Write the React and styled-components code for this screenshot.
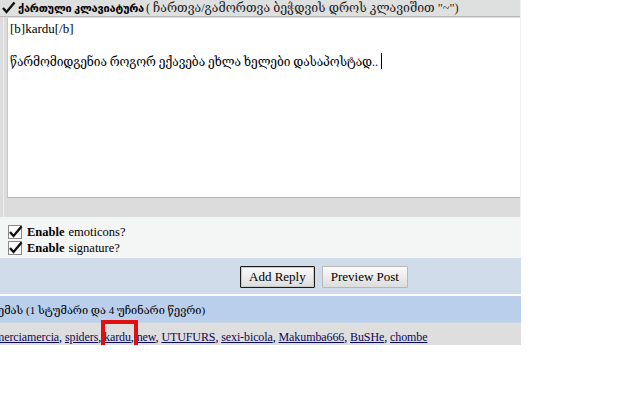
import React from 'react'
import styled, { createGlobalStyle } from 'styled-components';

const GlobalStyle = createGlobalStyle`
  body {
    margin: 0;
    background: #fff;
    overflow: hidden;
  }
`;

const serif = `"Liberation Serif", "DejaVu Serif", serif`;
const geo = `"Liberation Serif", "DejaVu Serif", "DejaVu Sans", serif`;

const Page = styled.div`
  width: 521px;
  font-family: ${serif};
  color: #000;
  position: relative;
`;

const EditorPanel = styled.div`
  background: #dcdcdc;
  border-right: 1px solid #f0f0f0;
`;

const HeaderBar = styled.div`
  height: 16px;
  background: #dedfdf;
  border-bottom: 1px solid #b9b9b9;
  display: flex;
  align-items: center;
  gap: 2px;
  padding-left: 1px;
  white-space: nowrap;
  overflow: hidden;
`;

const KeyboardTitle = styled.span`
  font-family: "Liberation Serif", "DejaVu Sans", sans-serif;
  font-weight: bold;
  font-size: 11px;
  letter-spacing: -0.2px;
`;

const KeyboardHint = styled.span`
  font-family: ${geo};
  font-size: 12.3px;
  color: #222;
`;

const EditorBody = styled.div`
  padding: 1px 0 19px 7px;
  background: linear-gradient(to right, #dcdcdc 0 3px, #eeeeee 3px 4px, #dcdcdc 4px);
`;

const TextBox = styled.div`
  height: 176px;
  background: #fff;
  border-left: 1px solid #c8c8c8;
  border-bottom: 1px solid #b8b8b8;
  padding: 3px 0 0 2px;
  font-size: 13px;
  line-height: 16px;
`;

const TextLine = styled.div`
  font-family: ${geo};
  font-size: ${(props) => (props.geo ? '12px' : '13px')};
  margin-bottom: ${(props) => (props.gap ? '16px' : '0')};
  letter-spacing: ${(props) => (props.geo ? '-0.1px' : '0')};
  white-space: nowrap;
`;

const Caret = styled.span`
  display: inline-block;
  width: 1px;
  height: 16px;
  background: #000;
  vertical-align: -3px;
  margin-left: 3px;
`;

const OptionsPanel = styled.div`
  background: #f4f6f5;
  padding: 7px 0 1px 8px;
  height: 33px;
`;

const OptionRow = styled.label`
  display: flex;
  align-items: center;
  gap: 4px;
  font-size: 12.5px;
  height: 16px;
  & b {
    margin-right: 4px;
  }
`;

const ButtonRow = styled.div`
  background: #d1dceb;
  height: 36px;
  display: flex;
  align-items: center;
  gap: 7px;
  padding-left: 240px;
  & > * {
    margin-top: 2px;
  }
`;

const Button = styled.button`
  font-family: ${serif};
  font-size: 13px;
  height: 22px;
  padding: 0 8px;
  background: linear-gradient(#fbfbfb, #dcdcdc);
  border: 1px solid ${(props) => (props.focused ? '#1c1c1c' : '#b8b8b8')};
  box-shadow: ${(props) => (props.focused ? 'inset 0 0 0 1px #c8c8c8' : 'none')};
  color: #000;
  border-radius: 1px;
`;

const Divider = styled.div`
  height: 2px;
  background: #fff;
`;

const StatsBar = styled.div`
  background: #bacfec;
  height: 23px;
  padding-top: 3px;
  display: flex;
  align-items: center;
  font-family: ${geo};
  font-size: 11px;
  white-space: nowrap;
  overflow: hidden;
  border-bottom: 1px solid #c9d6e8;
`;

const StatsText = styled.span`
  margin-left: -2px;
`;

const UsersRow = styled.div`
  background: #dedede;
  height: 22px;
  display: flex;
  align-items: flex-end;
  font-size: 12px;
  line-height: 15px;
  white-space: nowrap;
  overflow: hidden;
`;

const UserList = styled.span`
  margin-left: -5px;
  letter-spacing: -0.1px;
  & a {
    color: #0a0a5c;
  }
`;

const Highlight = styled.div`
  position: absolute;
  box-sizing: border-box;
  left: 101px;
  top: 320px;
  width: 37px;
  height: 41px;
  border: 4px solid #e01010;
`;

const Check = ({ framed = true }) => (
  <svg width="15" height="15" viewBox="0 0 15 15">
    {framed && <rect x="0.5" y="0.5" width="13" height="13" fill="#fff" stroke="#8a8a8a" />}
    <path d="M2 7 L5.5 11 L13.5 1.5" fill="none" stroke="#111" strokeWidth="2.4" strokeLinejoin="miter" />
  </svg>
);

const users = ['merciamercia', 'spiders', 'kardu', 'new', 'UTUFURS', 'sexi-bicola', 'Makumba666', 'BuSHe', 'chombe'];

const App = () => {
  return (
    <Page>
      <GlobalStyle />
      <EditorPanel>
        <HeaderBar>
          <Check framed={false} />
          <KeyboardTitle>ქართული კლავიატურა</KeyboardTitle>
          <KeyboardHint>( ჩართვა/გამორთვა ბეჭდვის დროს კლავიშით "~")</KeyboardHint>
        </HeaderBar>
        <EditorBody>
          <TextBox>
            <TextLine gap>[b]kardu[/b]</TextLine>
            <TextLine geo>წარმომიდგენია როგორ ექავება ეხლა ხელები დასაპოსტად..<Caret /></TextLine>
          </TextBox>
        </EditorBody>
      </EditorPanel>
      <OptionsPanel>
        <OptionRow><Check /><span><b>Enable</b>emoticons?</span></OptionRow>
        <OptionRow><Check /><span><b>Enable</b>signature?</span></OptionRow>
      </OptionsPanel>
      <ButtonRow>
        <Button focused>Add Reply</Button>
        <Button>Preview Post</Button>
      </ButtonRow>
      <Divider />
      <StatsBar>
        <StatsText>ემას (1 სტუმარი და 4 უჩინარი წევრი)</StatsText>
      </StatsBar>
      <UsersRow>
        <UserList>
          {users.map((u, i) => (
            <React.Fragment key={u}>
              <a href="#">{u}</a>{i < users.length - 1 ? ', ' : ''}
            </React.Fragment>
          ))}
        </UserList>
      </UsersRow>
      <Highlight />
    </Page>
  )
}

export default App;
